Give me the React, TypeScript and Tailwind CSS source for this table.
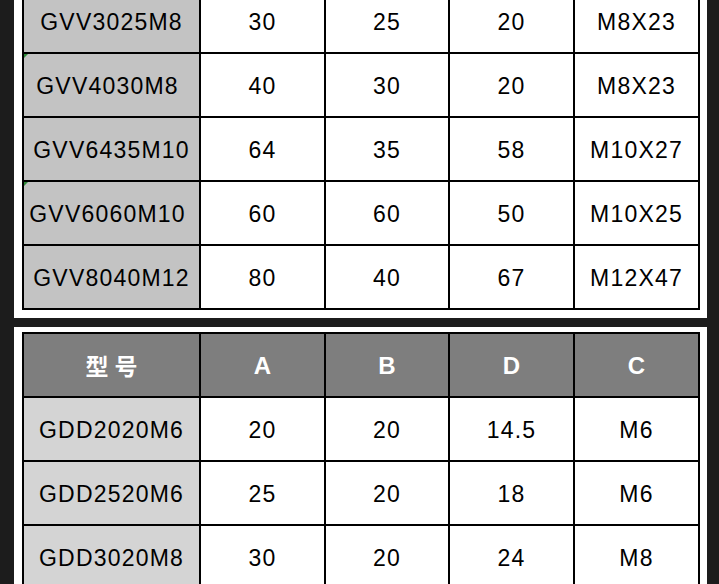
import React from 'react';

type Row = { model: string; cells: string[]; shift?: boolean; mark?: boolean };

const topRows: Row[] = [
  { model: 'GVV3025M8', cells: ['30', '25', '20', 'M8X23'] },
  { model: 'GVV4030M8', cells: ['40', '30', '20', 'M8X23'], shift: true, mark: true },
  { model: 'GVV6435M10', cells: ['64', '35', '58', 'M10X27'] },
  { model: 'GVV6060M10', cells: ['60', '60', '50', 'M10X25'], shift: true, mark: true },
  { model: 'GVV8040M12', cells: ['80', '40', '67', 'M12X47'] },
];

const bottomRows: Row[] = [
  { model: 'GDD2020M6', cells: ['20', '20', '14.5', 'M6'] },
  { model: 'GDD2520M6', cells: ['25', '20', '18', 'M6'] },
  { model: 'GDD3020M8', cells: ['30', '20', '24', 'M8'] },
];

const font = { fontFamily: '"Liberation Sans", Arial, "Noto Sans CJK SC", sans-serif' };

// 5 columns, 2px black lines between them (gap on black bg)
const gridCls =
  'grid grid-cols-[175px_123px_122px_123px_123px] gap-[2px] bg-black p-[2px] w-[678px]';

const cellCls = 'h-[62px] flex items-center justify-center pt-[3px] text-[23px] tracking-[1.2px] text-black';

const DataRows: React.FC<{ rows: Row[]; firstBg: string }> = ({ rows, firstBg }) => (
  <>
    {rows.map((r) => (
      <React.Fragment key={r.model}>
        <div className={`${cellCls} relative ${firstBg} ${r.shift ? 'pr-[8px]' : ''}`}>
          {r.mark && (
            <span className="absolute left-0 top-0 w-0 h-0 border-t-[4px] border-r-[4px] border-t-[#2f8a3a] border-r-transparent" />
          )}
          {r.model}
        </div>
        {r.cells.map((c, i) => (
          <div key={i} className={`${cellCls} bg-white`}>
            {c}
          </div>
        ))}
      </React.Fragment>
    ))}
  </>
);

export default function App() {
  return (
    <div className="w-[719px] h-[584px] overflow-hidden bg-[#1c1c1c]" style={font}>
      <div className="pl-[14px] -mt-[20px] flex flex-col gap-[9px]">
        {/* upper table (cut off at top) */}
        <div className="w-[693px] bg-white pl-[8px] pt-[8px] pb-[8px]">
          <div className={gridCls}>
            <DataRows rows={topRows} firstBg="bg-[#c3c3c3]" />
          </div>
        </div>

        {/* lower table */}
        <div className="w-[693px] bg-white pl-[8px] pt-[5px] pb-[8px]">
          <div className={gridCls}>
            <div className="h-[62px] flex items-center justify-center bg-[#7e7e7e] text-white text-[23px] font-bold tracking-[6px] pl-[6px]" style={{ fontFamily: '"Noto Sans CJK SC", sans-serif' }}>
              型号
            </div>
            {['A', 'B', 'D', 'C'].map((h) => (
              <div key={h} className="h-[62px] flex items-center justify-center pt-[2px] bg-[#7e7e7e] text-white text-[24px] font-bold">
                {h}
              </div>
            ))}
            <DataRows rows={bottomRows} firstBg="bg-[#d4d4d4]" />
          </div>
        </div>
      </div>
    </div>
  );
}
